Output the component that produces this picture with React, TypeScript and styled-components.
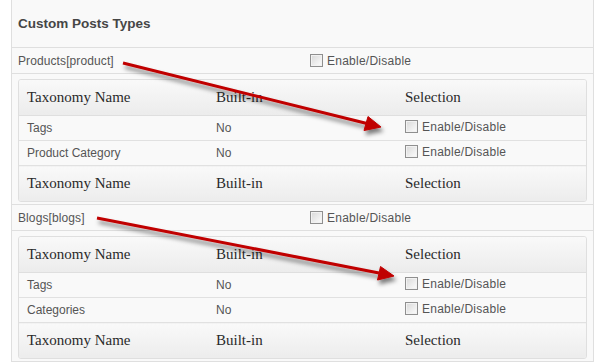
import styled, { createGlobalStyle } from 'styled-components';

const GlobalStyle = createGlobalStyle`
  body {
    margin: 0;
    background: #ffffff;
    font-family: "Liberation Sans", Arial, sans-serif;
  }
`;

type Taxonomy = { name: string; builtIn: string };
type PostType = { label: string; taxonomies: Taxonomy[] };

const postTypes: PostType[] = [
  {
    label: 'Products[product]',
    taxonomies: [
      { name: 'Tags', builtIn: 'No' },
      { name: 'Product Category', builtIn: 'No' },
    ],
  },
  {
    label: 'Blogs[blogs]',
    taxonomies: [
      { name: 'Tags', builtIn: 'No' },
      { name: 'Categories', builtIn: 'No' },
    ],
  },
];

function CheckLabel() {
  return (
    <Check>
      <Box />
      <span>Enable/Disable</span>
    </Check>
  );
}

function HeadRow() {
  return (
    <tr>
      <Th>Taxonomy Name</Th>
      <Th>Built-in</Th>
      <Th>Selection</Th>
    </tr>
  );
}

export default function App() {
  return (
    <Page>
      <GlobalStyle />
      <Panel>
        <Title>Custom Posts Types</Title>
        {postTypes.map((pt, i) => (
          <Section key={i}>
            <TypeRow>
              <span>{pt.label}</span>
              <CheckLabel />
            </TypeRow>
            <TableWrap>
              <Table>
                <thead>
                  <HeadRow />
                </thead>
                <tbody>
                  {pt.taxonomies.map((t, j) => (
                    <tr key={j}>
                      <Td>{t.name}</Td>
                      <Td>{t.builtIn}</Td>
                      <Td>
                        <CheckLabel />
                      </Td>
                    </tr>
                  ))}
                </tbody>
                <tfoot>
                  <HeadRow />
                </tfoot>
              </Table>
            </TableWrap>
          </Section>
        ))}
      </Panel>

      {/* red annotation arrows */}
      <Arrows width="606" height="363" viewBox="0 0 606 363">
        <defs>
          <filter id="shadow" x="-10%" y="-50%" width="120%" height="200%">
            <feDropShadow dx="2" dy="4" stdDeviation="2" floodColor="#000" floodOpacity="0.5" />
          </filter>
        </defs>
        <g filter="url(#shadow)" fill="#c00000" stroke="#c00000">
          <line x1="123" y1="63" x2="367" y2="123.5" strokeWidth="3" />
          <polygon points="381,127 364,130.5 368,116.5" strokeWidth="1" />
          <line x1="97" y1="218" x2="379" y2="273" strokeWidth="3" />
          <polygon points="394,276 377.5,280 380.5,266.5" strokeWidth="1" />
        </g>
      </Arrows>
    </Page>
  );
}

const Page = styled.div`
  position: relative;
  width: 606px;
  height: 363px;
  overflow: hidden;
`;

const Panel = styled.div`
  margin-left: 11px;
  width: 583px;
  box-sizing: border-box;
  background: #f9f9f9;
  border-left: 1px solid #dfdfdf;
  border-right: 1px solid #dfdfdf;
`;

const Title = styled.div`
  height: 48px;
  display: flex;
  align-items: center;
  padding-left: 6px;
  padding-bottom: 1px;
  box-sizing: border-box;
  border-bottom: 1px solid #dfdfdf;
  font-size: 13.5px;
  font-weight: bold;
  color: #464646;
`;

const Section = styled.div`
  border-bottom: 1px solid #dfdfdf;
  padding-bottom: 2px;
`;

const TypeRow = styled.div`
  display: grid;
  grid-template-columns: 292px 1fr;
  align-items: center;
  height: 25px;
  padding: 0 6px;
  border-bottom: 1px solid #dfdfdf;
  font-size: 12px;
  letter-spacing: 0.1px;
  color: #555;
`;

const TableWrap = styled.div`
  margin: 5px 6px 0 6px;
  border: 1px solid #dfdfdf;
  border-radius: 3px;
  overflow: hidden;
  background: #f9f9f9;
`;

const Table = styled.table`
  width: 100%;
  table-layout: fixed;
  border-collapse: collapse;
`;

const Th = styled.th`
  height: 35px;
  padding: 0 8px;
  text-align: left;
  font-family: "Liberation Serif", "Times New Roman", serif;
  font-size: 15px;
  font-weight: normal;
  color: #2a2a2a;
  background: linear-gradient(to bottom, #f9f9f9, #ececec);
  thead & {
    border-bottom: 1px solid #dfdfdf;
  }
`;

const Td = styled.td`
  height: 24px;
  padding: 0 8px;
  font-size: 12px;
  color: #555;
  border-bottom: 1px solid #e1e1e1;
  border-top: 1px solid #ffffff;
  vertical-align: middle;
`;

const Check = styled.span`
  display: inline-flex;
  align-items: center;
  gap: 4px;
  font-size: 12px;
  letter-spacing: 0.25px;
  color: #555;
`;

const Box = styled.span`
  display: inline-block;
  width: 13px;
  height: 13px;
  box-sizing: border-box;
  border: 1px solid #8f8f8f;
  background: linear-gradient(135deg, #d8d8d8, #f6f6f6 80%);
  box-shadow: inset 0 0 0 1px #f2f2f2;
`;

const Arrows = styled.svg`
  position: absolute;
  left: 0;
  top: 0;
  pointer-events: none;
`;
